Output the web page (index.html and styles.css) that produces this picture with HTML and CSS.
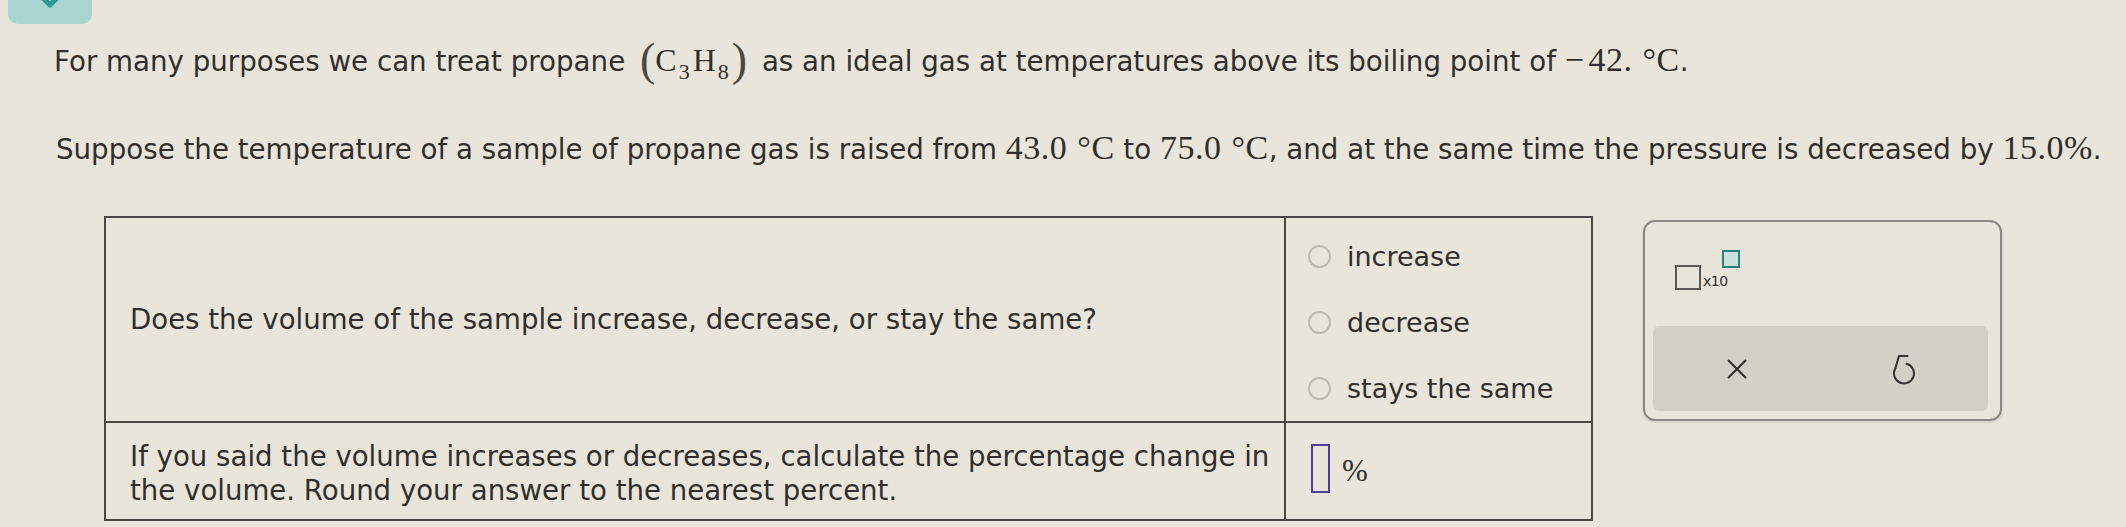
FILE: index.html
```html
<!DOCTYPE html>
<html lang="en">
<head>
<meta charset="utf-8">
<title>Propane ideal gas</title>
<link rel="stylesheet" href="styles.css">
</head>
<body>
<div class="tab">
  <svg class="tab-chevron" width="30" height="12" viewBox="0 0 30 12"><path d="M6 -4 L15 5 L24 -4" fill="none" stroke="#2a9893" stroke-width="5" stroke-linecap="round" stroke-linejoin="round"/></svg>
</div>
<main class="content">
  <p class="q q1">For many purposes we can treat propane <span class="formula"><span class="paren">(</span>C<sub>3</sub>H<sub>8</sub><span class="paren">)</span></span> as an ideal gas at temperatures above its boiling point of <span class="num"><span class="minus">−</span>42.<span class="unit">°C</span></span>.</p>
  <p class="q q2">Suppose the temperature of a sample of propane gas is raised from <span class="num">43.0<span class="unit">°C</span></span> to <span class="num">75.0<span class="unit">°C</span></span>, and at the same time the pressure is decreased by <span class="num">15.0%</span>.</p>
  <div class="work">
    <table class="answers">
      <tr class="row-choice">
        <td class="prompt">Does the volume of the sample increase, decrease, or stay the same?</td>
        <td class="choices">
          <div class="option"><span class="radio"></span><span>increase</span></div>
          <div class="option"><span class="radio"></span><span>decrease</span></div>
          <div class="option"><span class="radio"></span><span>stays the same</span></div>
        </td>
      </tr>
      <tr class="row-input">
        <td class="prompt">If you said the volume increases or decreases, calculate the percentage change in<br>the volume. Round your answer to the nearest percent.</td>
        <td class="entry"><span class="input-box"></span><span class="pct">%</span></td>
      </tr>
    </table>
    <div class="panel">
      <div class="panel-top">
        <div class="sci">
          <span class="sci-box"></span>
          <span class="sci-x">x10</span>
          <span class="sci-sup"></span>
        </div>
      </div>
      <div class="panel-bar">
        <div class="bar-btn">
          <svg width="22" height="20" viewBox="0 0 22 20"><path d="M2 1 L20 19 M20 1 L2 19" stroke="#333" stroke-width="2.2" fill="none"/></svg>
        </div>
        <div class="bar-btn">
          <svg width="26" height="32" viewBox="0 0 26 32"><path d="M4.3 15.5 A10 10 0 1 0 15.6 10.8" fill="none" stroke="#333" stroke-width="2" stroke-linecap="round"/><path d="M4.3 15.5 L8 3 L16.5 3" fill="none" stroke="#333" stroke-width="2" stroke-linecap="round" stroke-linejoin="round"/></svg>
        </div>
      </div>
    </div>
  </div>
</main>
</body>
</html>
```

FILE: styles.css
```css
html, body {
  margin: 0;
  padding: 0;
}
body {
  background: #e9e5da;
  color: #302f2d;
  font-family: "DejaVu Sans", Verdana, sans-serif;
  font-size: 27.7px;
  width: 2126px;
  height: 527px;
  overflow: hidden;
}
.tab {
  width: 84px;
  height: 24px;
  margin-left: 8px;
  background: #a9d5d0;
  border-radius: 0 0 10px 10px;
  display: flex;
  justify-content: center;
  align-items: flex-start;
}
.tab-chevron {
  display: block;
}
.content {
  padding-left: 54px;
}
.q {
  margin: 0;
  line-height: 44px;
  white-space: nowrap;
}
.q1 {
  margin-top: 14px;
}
.q2 {
  margin-top: 42px;
  padding-left: 2px;
}
.num {
  font-family: "Liberation Serif", "Times New Roman", serif;
  font-size: 34px;
  letter-spacing: 0.5px;
}
.minus {
  margin-right: 4px;
}
.unit {
  margin-left: 10px;
}
.formula {
  font-family: "Liberation Serif", "Times New Roman", serif;
  font-size: 32px;
  line-height: 0;
  margin: 0 6px 0 6px;
}
.formula sub {
  font-size: 22px;
  vertical-align: -8px;
  line-height: 0;
  margin: 0 3px 0 2px;
}
.paren {
  font-size: 46px;
  color: #4a4846;
  vertical-align: -4px;
  line-height: 0;
}
.work {
  margin-top: 44px;
  margin-left: 50px;
  display: flex;
  align-items: flex-start;
  gap: 50px;
}
.answers {
  border-collapse: collapse;
  width: 1489px;
  border: 2px solid #4a4744;
}
.answers td {
  border: 2px solid #4a4744;
  padding: 0;
}
.prompt {
  width: 1150px;
  padding-left: 24px !important;
  padding-right: 4px !important;
  font-size: 27.6px;
  line-height: 34px;
  vertical-align: middle;
  white-space: nowrap;
}
.row-input td {
  height: 91px;
}
.row-input .prompt {
  padding-top: 5px !important;
}
.choices {
  vertical-align: top;
  font-size: 27px;
  padding: 5px 0 0 22px !important;
}
.option {
  display: flex;
  align-items: center;
  gap: 16px;
  height: 66px;
}
.radio {
  width: 19px;
  height: 19px;
  border: 2px solid #bdbab3;
  border-radius: 50%;
  flex: none;
}
.entry {
  vertical-align: middle;
  padding-left: 25px !important;
  white-space: nowrap;
}
.input-box {
  display: inline-block;
  width: 15px;
  height: 45px;
  border: 2px solid #4d3f98;
  vertical-align: middle;
  margin-top: -6px;
}
.pct {
  font-family: "Liberation Serif", "Times New Roman", serif;
  font-size: 31px;
  margin-left: 12px;
  vertical-align: middle;
}
.panel {
  margin-top: 4px;
  width: 335px;
  height: 181px;
  border: 2px solid #8b8985;
  border-radius: 12px;
  box-shadow: 0 1px 3px rgba(0,0,0,0.12);
  display: flex;
  flex-direction: column;
  padding: 8px 12px 8px 8px;
}
.panel-top {
  height: 96px;
  padding-left: 22px;
}
.sci {
  display: flex;
  align-items: flex-start;
}
.sci-box {
  width: 22px;
  height: 21px;
  border: 2px solid #5a5754;
  margin-top: 35px;
}
.sci-x {
  font-family: "DejaVu Sans", sans-serif;
  font-size: 14px;
  line-height: 14px;
  margin-top: 44px;
  margin-left: 2px;
  letter-spacing: -0.5px;
}
.sci-sup {
  width: 14px;
  height: 14px;
  border: 2px solid #2d7f7a;
  background: #c9e2dc;
  margin-top: 20px;
  margin-left: -6px;
}
.panel-bar {
  height: 85px;
  background: #d3d0c8;
  border-radius: 6px;
  display: flex;
}
.bar-btn {
  flex: 1;
  display: flex;
  align-items: center;
  justify-content: center;
}
```
